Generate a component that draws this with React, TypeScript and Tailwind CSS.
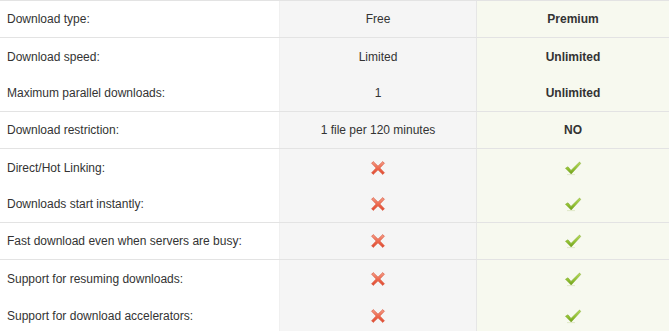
import React from 'react';

type Row = {
  label: string;
  free: React.ReactNode;
  premium: React.ReactNode;
  line?: boolean;
};

function Cross() {
  return (
    <svg width="16" height="16" viewBox="0 0 16 16">
      <defs>
        <linearGradient id="xg" x1="0" y1="0" x2="0" y2="1">
          <stop offset="0" stopColor="#f7a28c" />
          <stop offset="0.5" stopColor="#ee6a4f" />
          <stop offset="1" stopColor="#e0492f" />
        </linearGradient>
      </defs>
      <path
        d="M3.2 1.6 L8 6.2 L12.8 1.6 L14.4 3.2 L9.8 8 L14.4 12.8 L12.8 14.4 L8 9.8 L3.2 14.4 L1.6 12.8 L6.2 8 L1.6 3.2 Z"
        fill="url(#xg)"
        stroke="#d8563e"
        strokeWidth="0.7"
        strokeLinejoin="round"
      />
    </svg>
  );
}

function Check() {
  return (
    <svg width="18" height="16" viewBox="0 0 18 16">
      <defs>
        <linearGradient id="cg" x1="0" y1="0" x2="0" y2="1">
          <stop offset="0" stopColor="#b9dc5a" />
          <stop offset="0.6" stopColor="#8fc02f" />
          <stop offset="1" stopColor="#6f9d1e" />
        </linearGradient>
      </defs>
      <path
        d="M1.5 8.2 L4 6.8 L7 10.4 L15.6 2 L16.6 3.6 L7.2 14 Z"
        fill="url(#cg)"
        stroke="#7faa2a"
        strokeWidth="0.6"
        strokeLinejoin="round"
      />
      <path d="M3 14.6 L11 14.6" stroke="#dfe8c8" strokeWidth="1" />
    </svg>
  );
}

const rows: Row[] = [
  { label: 'Download type:', free: 'Free', premium: 'Premium', line: true },
  { label: 'Download speed:', free: 'Limited', premium: 'Unlimited' },
  { label: 'Maximum parallel downloads:', free: '1', premium: 'Unlimited', line: true },
  { label: 'Download restriction:', free: '1 file per 120 minutes', premium: 'NO', line: true },
  { label: 'Direct/Hot Linking:', free: <Cross />, premium: <Check /> },
  { label: 'Downloads start instantly:', free: <Cross />, premium: <Check />, line: true },
  { label: 'Fast download even when servers are busy:', free: <Cross />, premium: <Check />, line: true },
  { label: 'Support for resuming downloads:', free: <Cross />, premium: <Check /> },
  { label: 'Support for download accelerators:', free: <Cross />, premium: <Check /> },
];

export default function App() {
  return (
    <div
      className="w-[669px] h-[331px] overflow-hidden bg-white text-[12px] text-[#333]"
      style={{ fontFamily: '"Liberation Sans", Arial, sans-serif' }}
    >
      <div className="border-t border-[#e3e3e3]">
        {rows.map((row) => (
          <div
            key={row.label}
            className={`grid grid-cols-[279px_197px_1fr] h-[37px] ${row.line ? 'border-b border-[#e3e3e3]' : ''}`}
          >
            <div className="flex items-center pl-[7px]">{row.label}</div>
            <div className="flex items-center justify-center bg-[#f5f5f5] border-l border-[#f0f0f0]">
              {row.free}
            </div>
            <div className="flex items-center justify-center bg-[#f7f9ef] border-l border-[#e6e6e6] font-bold">
              {row.premium}
            </div>
          </div>
        ))}
      </div>
    </div>
  );
}
